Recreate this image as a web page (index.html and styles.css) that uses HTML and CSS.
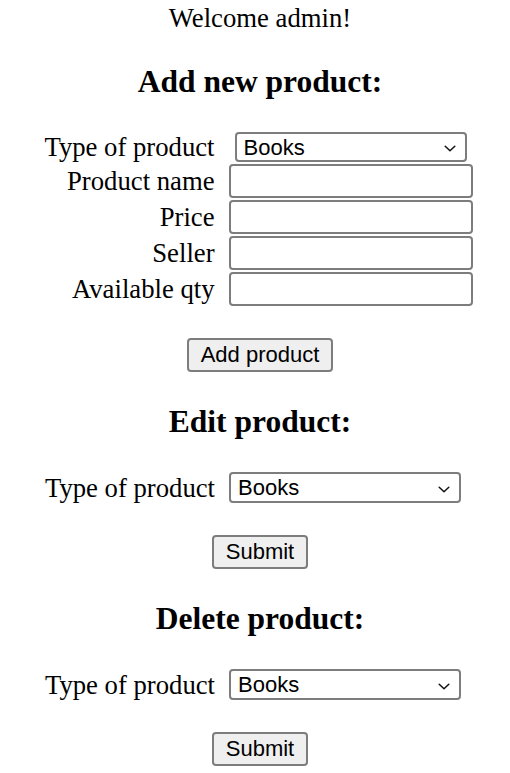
FILE: index.html
```
<!DOCTYPE html>
<html lang="en">
<head>
<meta charset="utf-8">
<title>Admin</title>
<link rel="stylesheet" href="styles.css">
</head>
<body>
<main class="page">
  <p class="welcome">Welcome admin!</p>

  <h3 class="heading">Add new product:</h3>
  <form class="add-form">
    <div class="field-grid">
      <label class="lbl" for="type-add">Type of product</label>
      <div class="ctl ctl-center">
        <span class="select-wrap select-add">
          <select id="type-add" class="select"><option>Books</option></select>
          <svg class="chev" width="12" height="7" viewBox="0 0 12 7"><path d="M1.2 1.2 L6 5.8 L10.8 1.2" fill="none" stroke="#111" stroke-width="1.5" stroke-linecap="round" stroke-linejoin="round"/></svg>
        </span>
      </div>
      <label class="lbl" for="pname">Product name</label>
      <div class="ctl"><input id="pname" class="text-input" type="text"></div>
      <label class="lbl" for="price">Price</label>
      <div class="ctl"><input id="price" class="text-input" type="text"></div>
      <label class="lbl" for="seller">Seller</label>
      <div class="ctl"><input id="seller" class="text-input" type="text"></div>
      <label class="lbl" for="qty">Available qty</label>
      <div class="ctl"><input id="qty" class="text-input" type="text"></div>
    </div>
    <button type="button" class="btn">Add product</button>
  </form>

  <h3 class="heading">Edit product:</h3>
  <form class="simple-form">
    <div class="inline-row">
      <label class="lbl" for="type-edit">Type of product</label>
      <span class="select-wrap">
        <select id="type-edit" class="select"><option>Books</option></select>
        <svg class="chev" width="12" height="7" viewBox="0 0 12 7"><path d="M1.2 1.2 L6 5.8 L10.8 1.2" fill="none" stroke="#111" stroke-width="1.5" stroke-linecap="round" stroke-linejoin="round"/></svg>
      </span>
    </div>
    <button type="button" class="btn">Submit</button>
  </form>

  <h3 class="heading">Delete product:</h3>
  <form class="simple-form">
    <div class="inline-row">
      <label class="lbl" for="type-del">Type of product</label>
      <span class="select-wrap">
        <select id="type-del" class="select"><option>Books</option></select>
        <svg class="chev" width="12" height="7" viewBox="0 0 12 7"><path d="M1.2 1.2 L6 5.8 L10.8 1.2" fill="none" stroke="#111" stroke-width="1.5" stroke-linecap="round" stroke-linejoin="round"/></svg>
      </span>
    </div>
    <button type="button" class="btn">Submit</button>
  </form>
</main>
</body>
</html>
```

FILE: styles.css
```
* { box-sizing: border-box; }

html, body {
  margin: 0;
  padding: 0;
  background: #ffffff;
}

body {
  font-family: "Liberation Serif", "Times New Roman", serif;
  font-size: 26.7px;
  color: #000;
}

.page {
  width: 510px;
  display: flex;
  flex-direction: column;
  align-items: center;
  gap: 32px;
  padding-top: 4px;
  padding-left: 10px;
}

.welcome {
  margin: 0;
  line-height: 28px;
}

.heading {
  margin: 0;
  font-size: 31.5px;
  line-height: 36px;
  font-weight: bold;
}

.add-form,
.simple-form {
  display: flex;
  flex-direction: column;
  align-items: center;
  gap: 32px;
}

.field-grid {
  display: grid;
  grid-template-columns: auto auto;
  column-gap: 14px;
  row-gap: 2px;
  align-items: center;
  margin-right: 3px;
}

.lbl {
  text-align: right;
  line-height: 30px;
  white-space: nowrap;
}

.ctl {
  display: flex;
}

.ctl-center {
  justify-content: center;
}

.text-input {
  width: 244px;
  height: 34px;
  margin: 0;
  border: 2px solid #7d7d7d;
  border-radius: 4px;
  background: #fff;
  font-family: "Liberation Sans", Arial, sans-serif;
  font-size: 21.7px;
  padding: 0 4px;
}

.select-wrap {
  position: relative;
  display: inline-flex;
}

.select {
  appearance: none;
  -webkit-appearance: none;
  width: 232px;
  height: 31px;
  margin: 0;
  border: 2px solid #7d7d7d;
  border-radius: 4px;
  background: #fff;
  color: #000;
  font-family: "Liberation Sans", Arial, sans-serif;
  font-size: 22px;
  line-height: 27px;
  padding: 0 30px 0 7px;
}

.select-add .select {
  height: 30px;
}

.chev {
  position: absolute;
  right: 11px;
  top: 50%;
  margin-top: -2px;
  pointer-events: none;
}

.inline-row {
  display: flex;
  align-items: center;
  gap: 14px;
  height: 31px;
  margin-right: 14px;
}

.btn {
  height: 34px;
  margin: 0;
  padding: 0 12px;
  border: 2px solid #7d7d7d;
  border-radius: 4px;
  background: #efefef;
  color: #000;
  font-family: "Liberation Sans", Arial, sans-serif;
  font-size: 22px;
  line-height: 28px;
}
```
